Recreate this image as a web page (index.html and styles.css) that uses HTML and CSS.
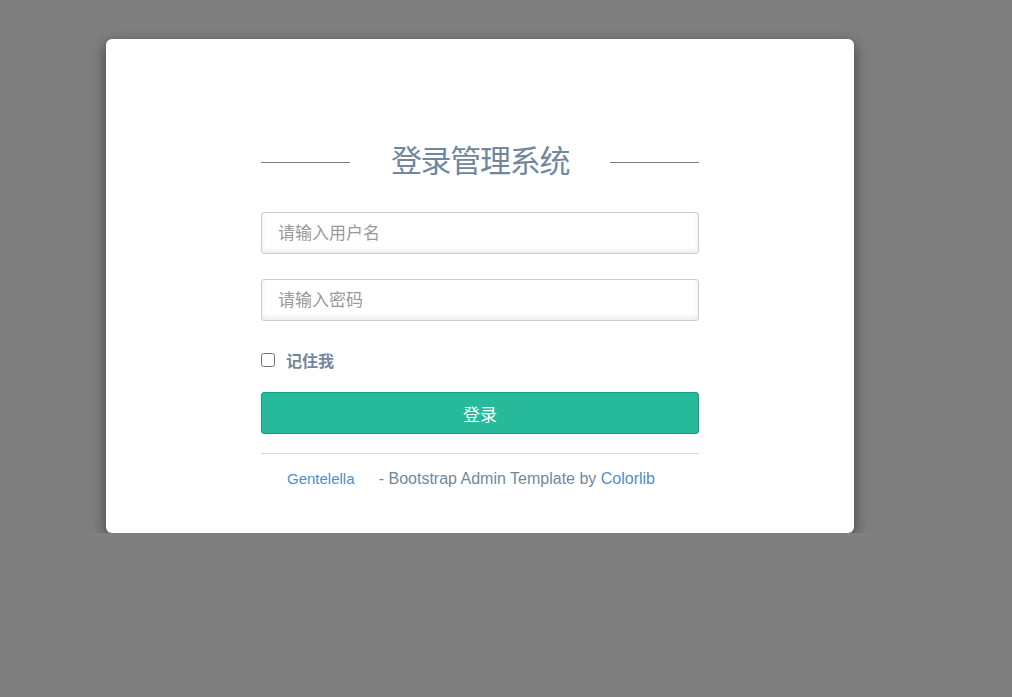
FILE: index.html
```html
<!DOCTYPE html>
<html lang="zh-CN">
<head>
    <meta charset="UTF-8">
    <meta name="viewport" content="width=device-width, initial-scale=1.0">
    <title>登录管理系统</title>
    <link rel="stylesheet" href="styles.css">
</head>
<body>

<div class="login-card">
    <form class="login-form">
        <h1 class="login-title">登录管理系统</h1>
        <input class="form-input" type="text" placeholder="请输入用户名">
        <input class="form-input second" type="password" placeholder="请输入密码">
        <label class="remember">
            <input type="checkbox">
            <span>记住我</span>
        </label>
        <button type="button" class="btn-login">登录</button>
        <div class="separator">
            <a href="#">Gentelella</a>
            <span class="credit">- Bootstrap Admin Template by <a href="#">Colorlib</a></span>
        </div>
    </form>
</div>

</body>
</html>
```

FILE: styles.css
```css
body {
    margin: 0;
    background: #7f7f7f;
    font-family: "Liberation Sans", Arial, "Noto Sans CJK SC", sans-serif;
    color: #73879C;
}
.login-card {
    width: 748px;
    height: 494px;
    margin: 39px 0 0 106px;
    background: #fff;
    border-radius: 6px;
    box-shadow: 0 5px 15px rgba(0, 0, 0, 0.5);
    box-sizing: border-box;
    padding-top: 98px;
}
.login-form {
    width: 438px;
    margin: 0 auto;
    display: flex;
    flex-direction: column;
}
.login-title {
    display: flex;
    align-items: center;
    gap: 41px;
    margin: 0 0 31px;
    font-family: "Noto Sans CJK SC", sans-serif;
    font-size: 31px;
    font-weight: 400;
    line-height: 44px;
    letter-spacing: -1.3px;
    color: #73879C;
}
.login-title::before,
.login-title::after {
    content: "";
    flex: 1;
    height: 1px;
    margin-top: 6px;
    background: #7e7e7e;
}
.form-input {
    height: 42px;
    box-sizing: border-box;
    border: 1px solid #ccc;
    border-radius: 3px;
    padding: 0 16px 4px;
    font-size: 17px;
    font-family: "Noto Sans CJK SC", sans-serif;
    color: #555;
    box-shadow: 0 1px 0 #fff, 0 -3px 5px rgba(0, 0, 0, 0.08) inset;
    outline: none;
}
.form-input::placeholder {
    color: #999;
}
.form-input.second {
    margin-top: 25px;
}
.remember {
    display: flex;
    align-items: center;
    margin-top: 28px;
    height: 22px;
    font-family: "Noto Sans CJK SC", sans-serif;
    font-size: 16px;
    font-weight: 700;
    color: #73879C;
}
.remember input {
    width: 14px;
    height: 14px;
    margin: 0 11px 0 0;
}
.btn-login {
    margin-top: 21px;
    height: 42px;
    background: #26B99A;
    border: 1px solid #169F85;
    border-radius: 3px;
    color: #fff;
    font-size: 17px;
    font-family: "Noto Sans CJK SC", sans-serif;
    cursor: pointer;
}
.separator {
    margin-top: 19px;
    border-top: 1px solid #d8d8d8;
    padding: 15px 0 0 26px;
    font-size: 15px;
    line-height: 20px;
}
.separator a {
    color: #4a8fd4;
    text-decoration: none;
}
.credit {
    margin-left: 20px;
    font-size: 16px;
}
```
